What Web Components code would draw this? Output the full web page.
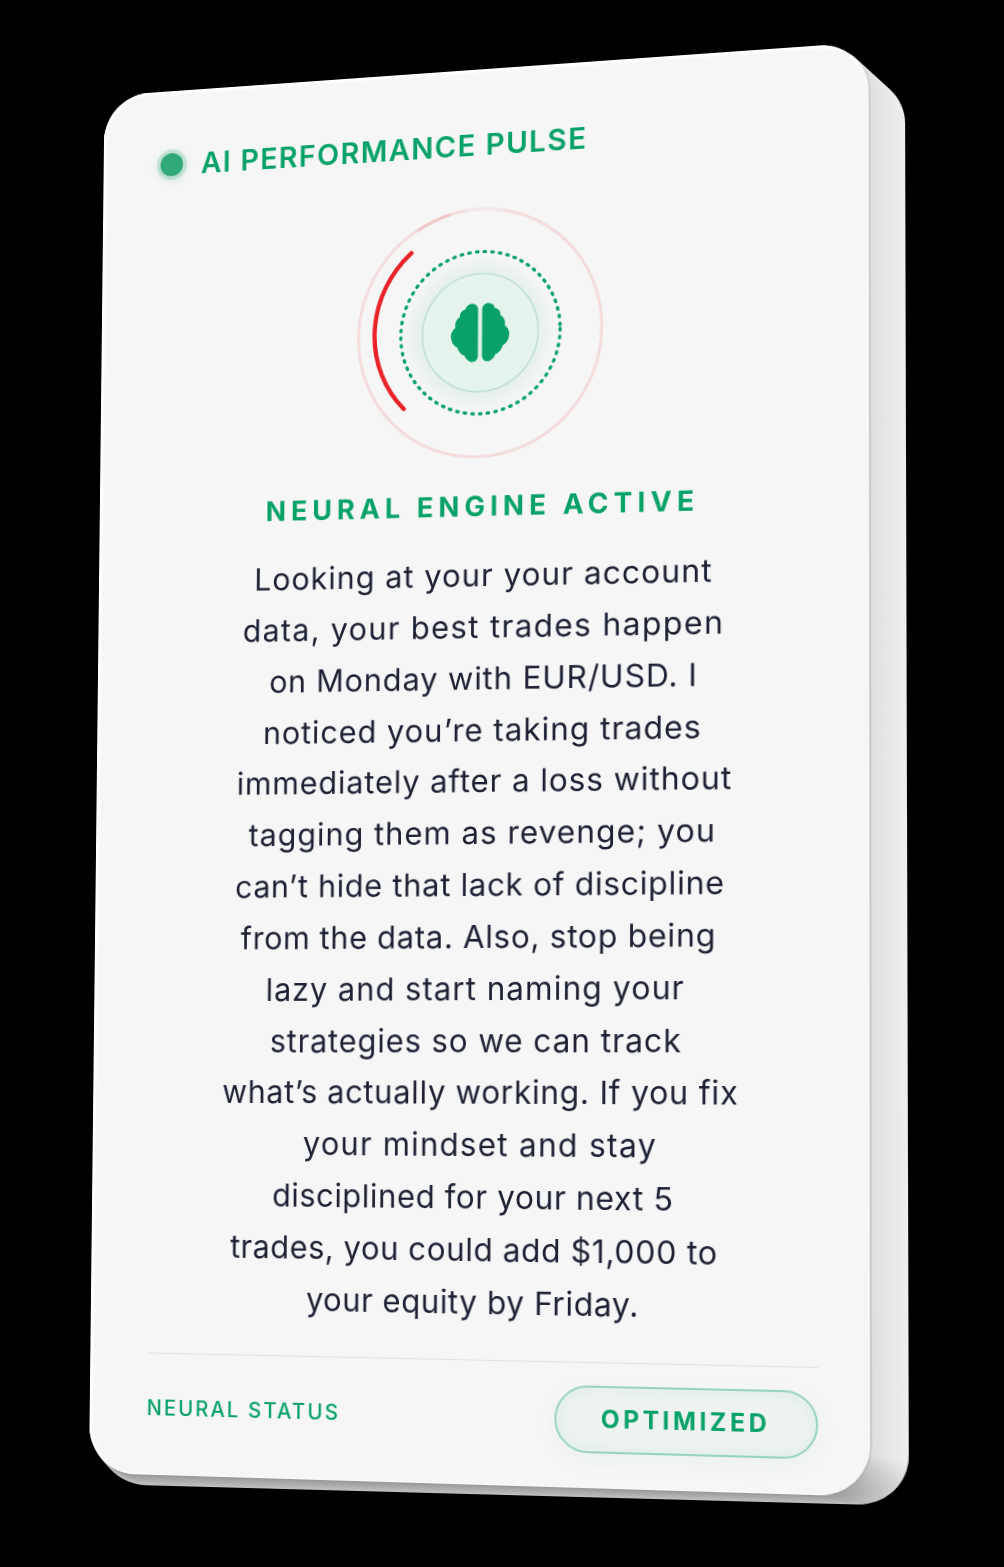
<!DOCTYPE html>
<html lang="en">
<head>
<meta charset="utf-8">
<title>AI Performance Pulse</title>
<style>
  html, body { margin: 0; background: #000; }
  body { width: 1004px; height: 1567px; overflow: hidden; font-family: "Inter", "Liberation Sans", sans-serif; }
</style>
</head>
<body>
<tilt-card>
  <pulse-header>AI PERFORMANCE PULSE</pulse-header>
  <neural-ring></neural-ring>
  <engine-title>NEURAL ENGINE ACTIVE</engine-title>
  <insight-copy>
    <copy-line style="--ls:1.05px;--dx:1px;--tilt:.8deg">Looking at your your account</copy-line>
    <copy-line style="--ls:1.4px;--dx:1px;--tilt:.7deg">data, your best trades happen</copy-line>
    <copy-line style="--ls:.85px;--dx:2px;--tilt:.6deg">on Monday with EUR/USD. I</copy-line>
    <copy-line style="--ls:1px;--dx:1px;--tilt:.5deg">noticed you’re taking trades</copy-line>
    <copy-line style="--ls:.9px;--dx:2.5px;--tilt:.4deg">immediately after a loss without</copy-line>
    <copy-line style="--ls:1.05px;--dx:1px;--tilt:.3deg">tagging them as revenge; you</copy-line>
    <copy-line style="--ls:.7px;--dx:-1.5px;--tilt:.2deg">can’t hide that lack of discipline</copy-line>
    <copy-line style="--ls:.7px;--dx:-2.5px;--tilt:.1deg">from the data. Also, stop being</copy-line>
    <copy-line style="--ls:1.05px;--dx:-4.5px">lazy and start naming your</copy-line>
    <copy-line style="--ls:.9px;--dx:-3.5px">strategies so we can track</copy-line>
    <copy-line style="--ls:.7px;--dx:-.5px">what’s actually working. If you fix</copy-line>
    <copy-line style="--ls:1.25px;--dx:2px">your mindset and stay</copy-line>
    <copy-line style="--ls:.6px;--dx:-5.5px">disciplined for your next 5</copy-line>
    <copy-line style="--ls:.6px;--dx:-5.5px">trades, you could add $1,000 to</copy-line>
    <copy-line style="--ls:.55px;--dx:-4.5px">your equity by Friday.</copy-line>
  </insight-copy>
  <pulse-footer>
    <span slot="label">NEURAL STATUS</span>
    <status-pill>OPTIMIZED</status-pill>
  </pulse-footer>
</tilt-card>

<script>
// flat card size, everything inside is laid out at this size then warped
const CARD_W = 780, CARD_H = 1420;

// corners of the front face and of the back of the slab, on the screenshot
const FRONT = [[104.5, 96], [868.5, 42], [870, 1497], [89, 1473]];
const BACK = [[118, 104], [905, 76], [909, 1506], [98, 1484]];

function quadMatrix(q) {
  const [[x0, y0], [x1, y1], [x2, y2], [x3, y3]] = q;
  const dx1 = x1 - x2, dx2 = x3 - x2, sx = x0 - x1 + x2 - x3;
  const dy1 = y1 - y2, dy2 = y3 - y2, sy = y0 - y1 + y2 - y3;
  const den = dx1 * dy2 - dx2 * dy1;
  const g = (sx * dy2 - dx2 * sy) / den;
  const h = (dx1 * sy - sx * dy1) / den;
  const a = x1 - x0 + g * x1, b = x3 - x0 + h * x3;
  const d = y1 - y0 + g * y1, e = y3 - y0 + h * y3;
  return `matrix3d(${[a / CARD_W, d / CARD_W, 0, g / CARD_W, b / CARD_H, e / CARD_H, 0, h / CARD_H, 0, 0, 1, 0, x0, y0, 0, 1].join(',')})`;
}

class TiltCard extends HTMLElement {
  connectedCallback() {
    const root = this.attachShadow({ mode: 'open' });
    root.innerHTML = `
      <style>
        :host { display: block; position: relative; width: 1004px; height: 1567px; overflow: hidden; }
        .plate, .face {
          position: absolute; left: 0; top: 0;
          width: ${CARD_W}px; height: ${CARD_H}px;
          box-sizing: border-box;
          border-radius: 48px;
          transform-origin: 0 0;
        }
        .plate { filter: blur(.6px); }
        .face {
          background: #f6f6f6;
          padding: 59px 49px 0 60px;
          display: flex; flex-direction: column;
          box-shadow: inset 0 3px 3px #fff, inset 3px 0 3px #fff;
          filter: blur(.3px);
        }
      </style>
      <div class="face" id="face"><slot></slot></div>
    `;
    const face = root.getElementById('face');
    face.style.transform = quadMatrix(FRONT);
    // the side of the slab is a stack of plates from the back to the front
    const n = 16;
    for (let i = n; i > 0; i--) {
      const t = i / n;
      const q = FRONT.map((p, k) => [p[0] + (BACK[k][0] - p[0]) * t, p[1] + (BACK[k][1] - p[1]) * t]);
      const plate = document.createElement('div');
      plate.className = 'plate';
      plate.style.transform = quadMatrix(q);
      const side = Math.round(t < .12 ? 205 : 222 + 16 * t);
      const low = Math.round(150 + 40 * t);
      plate.style.background = `linear-gradient(rgb(${side},${side},${side}) 97%, rgb(${low},${low},${low}) 100%)`;
      root.insertBefore(plate, face);
    }
  }
}

class PulseHeader extends HTMLElement {
  constructor() {
    super();
    this.attachShadow({ mode: 'open' }).innerHTML = `
      <style>
        :host {
          display: flex; align-items: center; gap: 19px;
          height: 36px; padding-left: 1px;
          color: #08a268; font: 600 30px/36px "Inter", sans-serif; letter-spacing: 1.4px;
        }
        .dot {
          width: 24px; height: 24px; border-radius: 50%;
          background: #31a878;
          box-shadow: 0 0 0 4px rgba(49,168,120,.2), 0 2px 8px 3px rgba(49,168,120,.18);
        }
      </style>
      <span class="dot"></span><slot></slot>
    `;
  }
}

class NeuralRing extends HTMLElement {
  constructor() {
    super();
    this.attachShadow({ mode: 'open' }).innerHTML = `
      <style>
        :host { display: block; width: 265px; height: 260px; margin: 43.5px 0 0 calc(50% - 134px); }
        svg { display: block; }
      </style>
      <svg width="265" height="260" viewBox="0 0 270 260" preserveAspectRatio="none" fill="none">
        <defs>
          <radialGradient id="glow">
            <stop offset="0" stop-color="#10a56f" stop-opacity=".16"/>
            <stop offset=".7" stop-color="#10a56f" stop-opacity=".09"/>
            <stop offset="1" stop-color="#10a56f" stop-opacity="0"/>
          </radialGradient>
          <path id="half" d="M118 56C118 44 110 37 100 37C90 37 83 43 81 52C70 54 63 64 64 74C54 79 48 92 51 105C40 112 35 126 39 138C41 150 48 158 57 162C60 174 68 184 78 186C82 198 92 206 102 206C112 206 118 198 118 190Z"/>
        </defs>
        <circle cx="135" cy="130" r="126" stroke="#f3dcdc" stroke-width="3"/>
        <path d="M121 5A126 126 0 0 1 160 6" stroke="#f1eaea" stroke-width="3.5"/>
        <path d="M70 23A126 126 0 0 1 104 8" stroke="#efc8c8" stroke-width="3"/>
        <circle cx="135" cy="130" r="80" fill="url(#glow)"/>
        <path d="M64 45A109 109 0 0 0 57 204" stroke="#e8242a" stroke-width="4.5" stroke-linecap="round"/>
        <circle cx="136" cy="130" r="82.5" stroke="#08a268" stroke-width="3.4" stroke-linecap="round" stroke-dasharray="1.5 6.5"/>
        <circle cx="136" cy="130" r="60" fill="#e6f5ee" fill-opacity=".8" stroke="#bfe0d2" stroke-width="1.6"/>
        <g transform="translate(92.6 87.3) scale(.35)" fill="#0aa169">
          <use href="#half"/>
          <use href="#half" transform="matrix(-1 0 0 1 248 0)"/>
        </g>
      </svg>
    `;
  }
}

class EngineTitle extends HTMLElement {
  constructor() {
    super();
    this.attachShadow({ mode: 'open' }).innerHTML = `
      <style>
        :host {
          display: block; margin-top: 31px; text-align: center;
          color: #08a268; font: 700 28px/30px "Inter", sans-serif; letter-spacing: 5.1px;
          transform: skewY(.8deg);
        }
      </style>
      <slot></slot>
    `;
  }
}

class InsightCopy extends HTMLElement {
  constructor() {
    super();
    this.attachShadow({ mode: 'open' }).innerHTML = `
      <style>
        :host {
          display: block; margin-top: 29.5px; text-align: center; white-space: nowrap;
          color: #1d2133; font: 400 31.5px/51.85px "Inter", sans-serif;
        }
      </style>
      <slot></slot>
    `;
  }
}

class CopyLine extends HTMLElement {
  constructor() {
    super();
    this.attachShadow({ mode: 'open' }).innerHTML = `
      <style>
        :host {
          display: block; letter-spacing: var(--ls, .7px);
          transform: translateX(var(--dx, 0)) skewY(var(--tilt, 0deg));
        }
      </style>
      <slot></slot>
    `;
  }
}

class PulseFooter extends HTMLElement {
  constructor() {
    super();
    this.attachShadow({ mode: 'open' }).innerHTML = `
      <style>
        :host {
          display: flex; align-items: center; justify-content: space-between;
          margin-top: 30.25px; padding-top: 22px;
          border-top: 1.5px solid #e2e2e2;
        }
        .label { color: #08a268; font: 500 21px/28px "Inter", sans-serif; letter-spacing: 2.2px; }
      </style>
      <span class="label"><slot name="label"></slot></span>
      <slot></slot>
    `;
  }
}

class StatusPill extends HTMLElement {
  constructor() {
    super();
    this.attachShadow({ mode: 'open' }).innerHTML = `
      <style>
        :host {
          display: flex; align-items: center; justify-content: center;
          box-sizing: border-box; width: 256px; height: 66px; border-radius: 33px;
          border: 2px solid #98d4bb;
          background: rgba(16,165,111,.035);
          box-shadow: inset 0 0 16px rgba(16,165,111,.08), 0 6px 22px rgba(16,165,111,.05);
          color: #08a268; font: 700 24px/30px "Inter", sans-serif; letter-spacing: 3.4px;
        }
      </style>
      <slot></slot>
    `;
  }
}

customElements.define('tilt-card', TiltCard);
customElements.define('pulse-header', PulseHeader);
customElements.define('neural-ring', NeuralRing);
customElements.define('engine-title', EngineTitle);
customElements.define('insight-copy', InsightCopy);
customElements.define('copy-line', CopyLine);
customElements.define('pulse-footer', PulseFooter);
customElements.define('status-pill', StatusPill);
</script>
</body>
</html>
